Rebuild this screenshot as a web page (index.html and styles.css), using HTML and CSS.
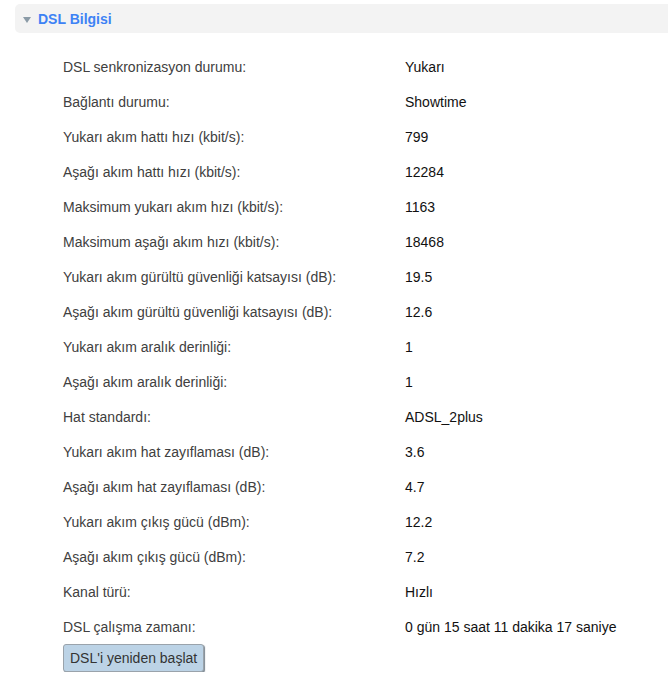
FILE: index.html
```html
<!DOCTYPE html>
<html lang="tr">
<head>
<meta charset="utf-8">
<title>DSL Bilgisi</title>
<link rel="stylesheet" href="styles.css">
</head>
<body>
<div class="panel">
  <div class="panel-head">
    <span class="tri"></span>
    <span class="title">DSL Bilgisi</span>
  </div>
  <div class="rows">
    <div class="row"><span class="label">DSL senkronizasyon durumu:</span><span class="value">Yukarı</span></div>
    <div class="row"><span class="label">Bağlantı durumu:</span><span class="value">Showtime</span></div>
    <div class="row"><span class="label">Yukarı akım hattı hızı (kbit/s):</span><span class="value">799</span></div>
    <div class="row"><span class="label">Aşağı akım hattı hızı (kbit/s):</span><span class="value">12284</span></div>
    <div class="row"><span class="label">Maksimum yukarı akım hızı (kbit/s):</span><span class="value">1163</span></div>
    <div class="row"><span class="label">Maksimum aşağı akım hızı (kbit/s):</span><span class="value">18468</span></div>
    <div class="row"><span class="label">Yukarı akım gürültü güvenliği katsayısı (dB):</span><span class="value">19.5</span></div>
    <div class="row"><span class="label">Aşağı akım gürültü güvenliği katsayısı (dB):</span><span class="value">12.6</span></div>
    <div class="row"><span class="label">Yukarı akım aralık derinliği:</span><span class="value">1</span></div>
    <div class="row"><span class="label">Aşağı akım aralık derinliği:</span><span class="value">1</span></div>
    <div class="row"><span class="label">Hat standardı:</span><span class="value">ADSL_2plus</span></div>
    <div class="row"><span class="label">Yukarı akım hat zayıflaması (dB):</span><span class="value">3.6</span></div>
    <div class="row"><span class="label">Aşağı akım hat zayıflaması (dB):</span><span class="value">4.7</span></div>
    <div class="row"><span class="label">Yukarı akım çıkış gücü (dBm):</span><span class="value">12.2</span></div>
    <div class="row"><span class="label">Aşağı akım çıkış gücü (dBm):</span><span class="value">7.2</span></div>
    <div class="row"><span class="label">Kanal türü:</span><span class="value">Hızlı</span></div>
    <div class="row"><span class="label">DSL çalışma zamanı:</span><span class="value">0 gün 15 saat 11 dakika 17 saniye</span></div>
  </div>
  <div class="actions">
    <button class="btn" type="button">DSL'i yeniden başlat</button>
  </div>
</div>
</body>
</html>
```
FILE: styles.css
```css
html, body {
  margin: 0;
  padding: 0;
  background: #ffffff;
}
body {
  font-family: "Liberation Sans", Arial, sans-serif;
  font-size: 14px;
  color: #333;
}
.panel {
  padding: 4px 0 0 15px;
}
.panel-head {
  display: flex;
  align-items: center;
  height: 29px;
  background: #f3f3f3;
  border-radius: 5px 0 0 5px;
  padding-left: 8px;
  margin-right: -10px;
}
.tri {
  width: 0;
  height: 0;
  border-left: 4px solid transparent;
  border-right: 4px solid transparent;
  border-top: 6px solid #8a9aa6;
  margin-right: 7px;
  margin-top: 2px;
}
.title {
  font-weight: bold;
  font-size: 14px;
  color: #3d82f5;
}
.rows {
  padding: 16px 0 0 48px;
}
.row {
  display: flex;
  height: 35px;
  align-items: center;
}
.label {
  width: 342px;
  flex: none;
  color: #404040;
}
.value {
  color: #111;
}
.actions {
  padding: 0 0 0 48px;
}
.btn {
  font-family: "Liberation Sans", Arial, sans-serif;
  font-size: 14px;
  color: #333;
  height: 28px;
  padding: 0 6px;
  white-space: nowrap;
  background: #bcd3e6;
  border: 1px solid #9aa3ab;
  border-radius: 3px;
  box-shadow: 1px 1px 1px #7c8791;
}
```
